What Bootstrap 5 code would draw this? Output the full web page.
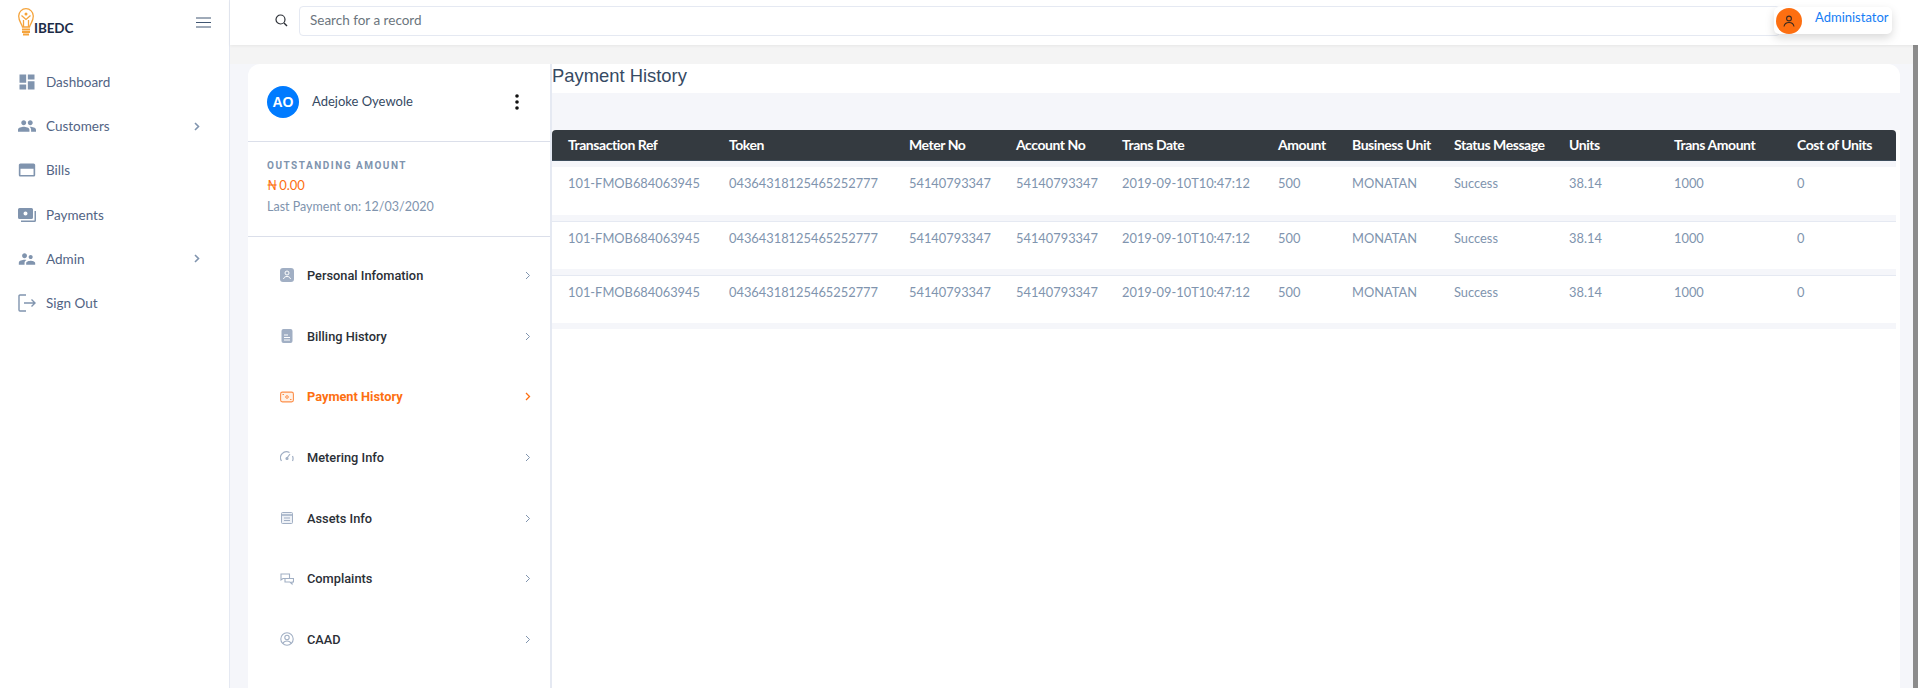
<!DOCTYPE html>
<html lang="en"><head><meta charset="utf-8"><title>IBEDC</title>
<link href="https://cdn.jsdelivr.net/npm/bootstrap@5.3.0/dist/css/bootstrap.min.css" rel="stylesheet">
<style>
html,body{height:688px;overflow:hidden}
body{font-family:Lato,sans-serif;font-size:14px;color:#526484;background:#f5f6fa}
.side{width:230px;flex:none;height:688px;background:#fff;border-right:1px solid #e5e9f2}
.brand{height:45px;padding:8px 18px 0 18px}
.brandtxt{font:700 13.5px/1 Lato,sans-serif;color:#1c2b46;letter-spacing:-.1px;margin-left:0;margin-bottom:1px}
.hamb{margin-top:9px;margin-right:0}
.navlist{padding-top:15px}
.navrow{height:44.2px;padding:0 29px 0 18px;color:#526484;font-size:13.5px;text-decoration:none}
.navrow svg.ic{width:18px;height:18px;margin-right:10px;fill:#8094ae;flex:none}
.chev{margin-left:auto;flex:none}
.mainwrap{min-width:0}
.topbar{height:45px;background:#fff;padding:0 26px 4px 45px;box-shadow:0 1px 3px rgba(0,0,0,.06);position:relative;z-index:2}
.srch{height:30px;margin-left:11px;border:1px solid #e5e9f2;border-radius:4px;padding:0 10px;font-size:13.5px;color:#6c757d;background:#fff;margin-right:-6px}
.admin{width:118px;height:27px;background:#fff;border-radius:5px;box-shadow:0 4px 10px rgba(0,0,0,.15);position:relative;flex:none;font-size:13px;color:#147df5}
.admav{width:26px;height:26px;border-radius:50%;background:#fd6f11;margin-left:2px;margin-right:13px;flex:none}
.admin span{position:relative;top:-3px}
.scrollarea{flex:1;min-height:0;padding:19px 18px 0 18px;background:linear-gradient(#f4f4f4 19px,#f5f6fa 19px)}
.bigcard{background:#fff;border-radius:12px;height:640px;overflow:hidden}
.prof{width:304px;flex:none;border-right:2px solid #e5e9f2}
.phead{height:78px;padding:0 31px 2px 19px;border-bottom:1px solid #dbdfea}
.avat{width:32px;height:32px;border-radius:50%;background:#007bff;color:#fff;font:700 14px/32px "Liberation Sans",sans-serif;text-align:center;margin-right:13px}
.pname{font-size:13px;color:#364a63}
.bal{height:95px;padding:17px 19px 0;border-bottom:1px solid #dbdfea;line-height:21px}
.ovline{font:700 10px/14px Roboto,sans-serif;letter-spacing:.15em;color:#8094ae;margin-bottom:2px}
.amt{color:#fd6f11;font-size:13px;line-height:21px;word-spacing:-1.5px}
.lastp{color:#8094ae;font-size:12.5px}
.pmenu{padding-top:8px}
.pitem{height:60.7px;padding:0 19px 0 32px;font:500 12.8px Roboto,sans-serif;color:#2b2f36;text-decoration:none}
.pitem svg.ic{width:14px;height:14px;margin-right:13px;flex:none;color:#a1afc4}
.pitem.act{color:#fd6f11;font-weight:700}
.pitem.act svg.ic{color:#fd8f4a}
.content{min-width:0}
.ctitle{height:29px;font:18.4px/24px "Liberation Sans",sans-serif;color:#364a63}
.gband{height:37px;background:#f5f6fa}
.tbl{table-layout:fixed;width:1344px;margin:0;border-collapse:separate;border-spacing:0}
.tbl th{background:#343a40;color:#fff;font:700 14px/29px Lato,sans-serif;padding:0 0 0 16px;border:0;height:31px;vertical-align:top;letter-spacing:-.45px;white-space:nowrap;border-bottom:1px solid #3d4d5c}
.tbl th:first-child{border-top-left-radius:4px}
.tbl th:last-child{border-top-right-radius:4px}
.tbl td{background:#fff;color:#8094ae;padding:6px 0 0 16px;height:54px;vertical-align:top;border-top:1px solid #e5e9f2;border-bottom:6px solid #f5f6fa;line-height:21px;white-space:nowrap;font-size:12.85px}
.tbl tbody tr:first-child td{border-top:6px solid #f5f6fa;height:60px}
.c1{width:161px}.c2{width:180px}.c3{width:107px}.c4{width:106px}.c5{width:156px}.c6{width:74px}.c7{width:102px}.c8{width:115px}.c9{width:105px}.c10{width:123px}.c11{width:115px}
.sbar{position:absolute;right:0;top:45px;width:5px;height:643px;background:#8c8c8c}
</style></head>
<body class="d-flex">
<aside class="side">
 <div class="brand d-flex align-items-start justify-content-between">
  <div class="d-flex align-items-end">
   <svg width="16" height="28" viewBox="0 0 16 28"><g fill="none" stroke="#f5a43c" stroke-width="1.300"><path d="M4.500 19C3.500 15 .7 13.500 .7 8a7.300 7.300 0 0 1 14.600 0c0 5.500-2.800 7-3.800 11z"/><path d="M4 21.500h8M4 24h8M5 26.500h6" stroke-width="1.800"/><path d="M5.500 19v-7M10.500 19v-7M3.500 7.500l4.500 4 4.500-4"/></g><circle cx="8" cy="6" r="1.500" fill="#f5a43c"/></svg>
   <span class="brandtxt">IBEDC</span>
  </div>
  <svg class="hamb" width="15" height="11" viewBox="0 0 15 11"><path d="M0 1h15M0 5.500h15M0 10h15" stroke="#405672" stroke-width="1"/></svg>
 </div>
 <nav class="navlist">
  <a class="navrow d-flex align-items-center" href="#"><svg class="ic" viewBox="1.200 1.200 21.600 21.600"><path d="M13 3v6h8V3M13 21h8V11h-8M3 21h8v-6H3M3 13h8V3H3z"/></svg>Dashboard</a>
  <a class="navrow d-flex align-items-center" href="#"><svg class="ic" viewBox="1 3 22 18"><path d="M16 11c1.660 0 2.990-1.340 2.990-3S17.660 5 16 5c-1.660 0-3 1.340-3 3s1.340 3 3 3zm-8 0c1.660 0 2.990-1.340 2.990-3S9.660 5 8 5C6.340 5 5 6.340 5 8s1.340 3 3 3zm0 2c-2.330 0-7 1.170-7 3.500V19h14v-2.500c0-2.330-4.670-3.500-7-3.500zm8 0c-.29 0-.62.020-.97.050 1.160.840 1.970 1.970 1.970 3.450V19h6v-2.500c0-2.330-4.670-3.500-7-3.500z"/></svg>Customers<svg class="chev" width="6" height="9" viewBox="0 0 6 9"><path d="M1 1l3.500 3.500L1 8" fill="none" stroke="#8094ae" stroke-width="1.600"/></svg></a>
  <a class="navrow d-flex align-items-center" href="#"><svg class="ic" viewBox="1 3 22 18"><path fill-rule="evenodd" d="M20 4H4c-1.110 0-1.990.89-1.990 2L2 18c0 1.110.89 2 2 2h16c1.110 0 2-.89 2-2V6c0-1.110-.89-2-2-2zm0 14H4v-7.500h16z"/></svg>Bills</a>
  <a class="navrow d-flex align-items-center" href="#"><svg class="ic" viewBox="0 0 18 16"><path d="M1.500 1h12A1.500 1.500 0 0 1 15 2.500v8a1.500 1.500 0 0 1-1.500 1.500h-12A1.500 1.500 0 0 1 0 10.500v-8A1.500 1.500 0 0 1 1.500 1zm6 3.500a2 2 0 1 0 0 4 2 2 0 0 0 0-4z" fill-rule="evenodd"/><path d="M16.500 4H18v9.500a1.500 1.500 0 0 1-1.500 1.500H3v-1.500h13.500z"/></svg>Payments</a>
  <a class="navrow d-flex align-items-center" href="#"><svg class="ic" viewBox="1 3 22 18"><path d="M16.500 12c1.380 0 2.490-1.120 2.490-2.500S17.880 7 16.500 7C15.120 7 14 8.120 14 9.500s1.120 2.500 2.500 2.500zM9 11c1.660 0 2.990-1.340 2.990-3S10.660 5 9 5C7.340 5 6 6.340 6 8s1.340 3 3 3zm7.500 3c-1.830 0-5.500.92-5.500 2.750V19h11v-2.250c0-1.830-3.670-2.750-5.500-2.750zM9 13c-2.330 0-7 1.170-7 3.500V19h7v-2.250c0-.85.33-2.340 2.370-3.470C10.500 13.100 9.660 13 9 13z"/></svg>Admin<svg class="chev" width="6" height="9" viewBox="0 0 6 9"><path d="M1 1l3.500 3.500L1 8" fill="none" stroke="#8094ae" stroke-width="1.600"/></svg></a>
  <a class="navrow d-flex align-items-center" href="#"><svg class="ic" viewBox="0 0 18 18"><path d="M8 1H2a1 1 0 0 0-1 1v14a1 1 0 0 0 1 1h6M6 9h11M13.500 5.500L17 9l-3.500 3.500" fill="none" stroke="#8094ae" stroke-width="1.400"/></svg>Sign Out</a>
 </nav>
</aside>
<div class="mainwrap flex-grow-1 d-flex flex-column">
 <header class="topbar d-flex align-items-center">
  <svg width="13" height="13" viewBox="0 0 13 13"><circle cx="5.500" cy="5.500" r="4.500" fill="none" stroke="#2b2f36" stroke-width="1.200"/><path d="M9 9l3 3" stroke="#2b2f36" stroke-width="1.400"/></svg>
  <div class="srch flex-grow-1 d-flex align-items-center">Search for a record</div>
  <div class="admin d-flex align-items-center">
   <div class="admav d-flex align-items-center justify-content-center"><svg width="14" height="14" viewBox="0 0 14 14" fill="none" stroke="#3a2a20" stroke-width="1.100"><circle cx="7" cy="4.500" r="2.400"/><path d="M2 12.500c.5-2.800 2.500-4 5-4s4.500 1.200 5 4"/></svg></div>
   <span>Administator</span>
  </div>
 </header>
 <div class="scrollarea">
  <div class="bigcard d-flex">
   <div class="prof">
    <div class="phead d-flex align-items-center">
     <div class="avat">AO</div><div class="pname">Adejoke Oyewole</div>
     <svg class="ms-auto" width="4" height="16" viewBox="0 0 4 16" fill="#111"><circle cx="2" cy="2" r="1.800"/><circle cx="2" cy="8" r="1.800"/><circle cx="2" cy="14" r="1.800"/></svg>
    </div>
    <div class="bal">
     <div class="ovline">OUTSTANDING AMOUNT</div>
     <div class="amt">₦ 0.00</div>
     <div class="lastp">Last Payment on: 12/03/2020</div>
    </div>
    <div class="pmenu">
     <a class="pitem d-flex align-items-center" href="#"><svg class="ic" viewBox="0 0 14 14"><rect width="14" height="14" rx="3" fill="currentColor"/><circle cx="7" cy="5" r="2" fill="none" stroke="#fff"/><path d="M3.500 11c.5-2 2-2.500 3.500-2.500s3 .5 3.500 2.500" fill="none" stroke="#fff"/></svg>Personal Infomation<svg class="chev" width="6" height="9" viewBox="0 0 6 9"><path d="M1 1l3.500 3.500L1 8" fill="none" stroke="#8094ae"/></svg></a>
     <a class="pitem d-flex align-items-center" href="#"><svg class="ic" viewBox="0 0 14 14"><rect x="1.500" width="11" height="14" rx="2" fill="currentColor"/><path d="M4 6h4M4 8.500h6M4 11h6" stroke="#fff"/></svg>Billing History<svg class="chev" width="6" height="9" viewBox="0 0 6 9"><path d="M1 1l3.500 3.500L1 8" fill="none" stroke="#8094ae"/></svg></a>
     <a class="pitem act d-flex align-items-center" href="#"><svg class="ic" viewBox="0 0 14 14"><rect x=".6" y="2.100" width="12.800" height="9.800" rx="1.800" fill="#fff2e8" stroke="currentColor" stroke-width="1.100"/><circle cx="7" cy="7" r="1.300" fill="none" stroke="currentColor"/><path d="M2.500 4.500h1.500M10 9.500h1.500" stroke="currentColor"/></svg>Payment History<svg class="chev" width="6" height="9" viewBox="0 0 6 9"><path d="M1 1l3.500 3.500L1 8" fill="none" stroke="#fd6f11" stroke-width="1.300"/></svg></a>
     <a class="pitem d-flex align-items-center" href="#"><svg class="ic" viewBox="0 0 14 14" fill="none" stroke="currentColor" stroke-width="1.200"><path d="M1.500 11A6 6 0 0 1 9.500 2.500M12.500 6a6 6 0 0 1 0 5M7 8l3-4"/><circle cx="7" cy="8.500" r="1" fill="currentColor"/></svg>Metering Info<svg class="chev" width="6" height="9" viewBox="0 0 6 9"><path d="M1 1l3.500 3.500L1 8" fill="none" stroke="#8094ae"/></svg></a>
     <a class="pitem d-flex align-items-center" href="#"><svg class="ic" viewBox="0 0 14 14" fill="none" stroke="currentColor"><rect x="1.500" y="1.500" width="11" height="11" rx="1" fill="#eef1f6"/><path d="M1.500 4h11" stroke-width="1.500"/><path d="M4 7h6M4 9.500h6"/></svg>Assets Info<svg class="chev" width="6" height="9" viewBox="0 0 6 9"><path d="M1 1l3.500 3.500L1 8" fill="none" stroke="#8094ae"/></svg></a>
     <a class="pitem d-flex align-items-center" href="#"><svg class="ic" viewBox="0 0 14 14" fill="none" stroke="currentColor" stroke-width="1.100"><path d="M1 2h8.500v4.500H3L1 8z"/><path d="M5 6.500h8.500V10H12v2L10 10H5z" fill="#fff"/></svg>Complaints<svg class="chev" width="6" height="9" viewBox="0 0 6 9"><path d="M1 1l3.500 3.500L1 8" fill="none" stroke="#8094ae"/></svg></a>
     <a class="pitem d-flex align-items-center" href="#"><svg class="ic" viewBox="0 0 14 14" fill="none" stroke="currentColor" stroke-width="1.100"><circle cx="7" cy="7" r="6.200"/><circle cx="7" cy="5.500" r="2.200"/><path d="M3 11.500c.7-1.800 2.300-2.500 4-2.500s3.300.7 4 2.500"/></svg>CAAD<svg class="chev" width="6" height="9" viewBox="0 0 6 9"><path d="M1 1l3.500 3.500L1 8" fill="none" stroke="#8094ae"/></svg></a>
    </div>
   </div>
   <div class="content flex-grow-1">
    <div class="ctitle">Payment History</div>
    <div class="gband"></div>
    <table class="table tbl">
     <colgroup><col class="c1"><col class="c2"><col class="c3"><col class="c4"><col class="c5"><col class="c6"><col class="c7"><col class="c8"><col class="c9"><col class="c10"><col class="c11"></colgroup>
     <thead><tr><th>Transaction Ref</th><th>Token</th><th>Meter No</th><th>Account No</th><th>Trans Date</th><th>Amount</th><th>Business Unit</th><th>Status Message</th><th>Units</th><th>Trans Amount</th><th>Cost of Units</th></tr></thead>
     <tbody>
      <tr><td>101-FMOB684063945</td><td>04364318125465252777</td><td>54140793347</td><td>54140793347</td><td>2019-09-10T10:47:12</td><td>500</td><td>MONATAN</td><td>Success</td><td>38.14</td><td>1000</td><td>0</td></tr>
      <tr><td>101-FMOB684063945</td><td>04364318125465252777</td><td>54140793347</td><td>54140793347</td><td>2019-09-10T10:47:12</td><td>500</td><td>MONATAN</td><td>Success</td><td>38.14</td><td>1000</td><td>0</td></tr>
      <tr><td>101-FMOB684063945</td><td>04364318125465252777</td><td>54140793347</td><td>54140793347</td><td>2019-09-10T10:47:12</td><td>500</td><td>MONATAN</td><td>Success</td><td>38.14</td><td>1000</td><td>0</td></tr>
     </tbody>
    </table>
   </div>
  </div>
 </div>
</div>
<div class="sbar"></div>
</body></html>
